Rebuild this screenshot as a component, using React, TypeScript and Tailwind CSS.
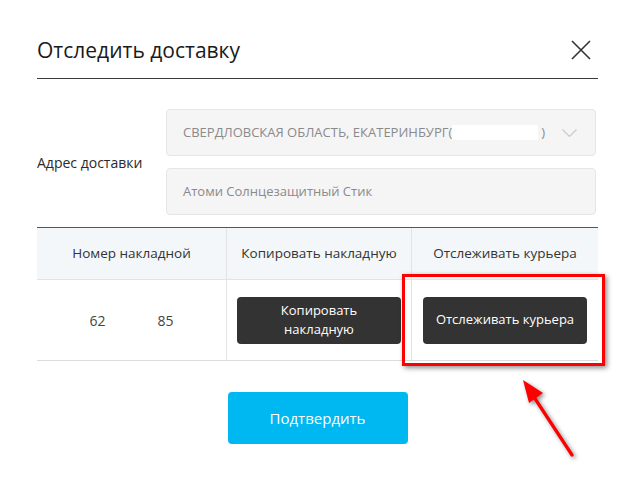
import { useState } from 'react';

const font = { fontFamily: '"Open Sans", "Noto Sans", sans-serif' };

function CloseIcon() {
    return (
        <svg width="20" height="20" viewBox="0 0 20 20" fill="none" stroke="#333" strokeWidth="1.6">
            <path d="M1 1 L19 19 M19 1 L1 19" />
        </svg>
    );
}

function Chevron() {
    return (
        <svg width="15" height="8" viewBox="0 0 15 8" fill="none" stroke="#c9c9c9" strokeWidth="1.1">
            <path d="M0.5 0.5 L7.5 7.5 L14.5 0.5" />
        </svg>
    );
}

export default function App() {
    const [open] = useState(true);
    if (!open) return null;

    return (
        <div className="relative w-[635px] h-[480px] bg-white overflow-hidden" style={font}>
            <div className="px-[37px] pt-[30px] w-[635px]">
                {/* Header */}
                <div className="flex items-center justify-between h-[49px] pb-[9px] border-b border-[#3a3a3a]">
                    <h2 className="text-[21px] leading-[28px] text-[#1a1a1a]">Отследить доставку</h2>
                    <button className="mr-[7px]">
                        <CloseIcon />
                    </button>
                </div>

                {/* Address */}
                <div className="flex items-center mt-[30px]">
                    <div className="w-[129px] text-[14px] text-[#2a2a2a]">Адрес доставки</div>
                    <div className="flex flex-col gap-[12px] w-[430px]">
                        <div className="flex items-center justify-between h-[47px] px-[16px] pr-[18px] bg-[#f5f5f5] border border-[#e6e6e6] rounded-[4px] text-[13px] text-[#8a8a8a]">
                            <span className="flex items-center">
                                СВЕРДЛОВСКАЯ ОБЛАСТЬ, ЕКАТЕРИНБУРГ(
                                <span className="inline-block w-[86px] h-[15px] bg-white" />
                                <span className="ml-[3px]">)</span>
                            </span>
                            <Chevron />
                        </div>
                        <div className="flex items-center h-[47px] px-[16px] bg-[#f5f5f5] border border-[#e6e6e6] rounded-[4px] text-[13px] text-[#8a8a8a]">
                            Атоми Солнцезащитный Стик
                        </div>
                    </div>
                </div>

                {/* Table */}
                <div className="mt-[12px] border-t border-[#555]">
                    <div className="grid grid-cols-[189px_185px_1fr] h-[52px] bg-[#f4f7fa] border-b border-[#e3e3e3] text-[13.5px] text-[#333]">
                        <div className="flex items-center justify-center">Номер накладной</div>
                        <div className="flex items-center justify-center border-l border-[#e3e3e3]">Копировать накладную</div>
                        <div className="flex items-center justify-center border-l border-[#e3e3e3]">Отслеживать курьера</div>
                    </div>
                    <div className="grid grid-cols-[189px_185px_1fr] h-[81px] border-b border-[#dcdcdc] text-[13px]">
                        <div className="flex items-center justify-center text-[#444] text-[14px]">
                            <span>62</span>
                            <span className="inline-block w-[52px]" />
                            <span>85</span>
                        </div>
                        <div className="flex items-center justify-center border-l border-[#e3e3e3] px-[10px]">
                            <button className="w-full h-[47px] rounded-[4px] bg-[#333] text-white text-[13px] leading-[19px]">
                                Копировать
                                <br />
                                накладную
                            </button>
                        </div>
                        <div className="flex items-center justify-center border-l border-[#e3e3e3] px-[11px]">
                            <button className="w-full h-[47px] rounded-[4px] bg-[#333] text-white text-[13px]">
                                Отслеживать курьера
                            </button>
                        </div>
                    </div>
                </div>

                {/* Confirm */}
                <div className="flex justify-center mt-[31px]">
                    <button className="w-[180px] h-[52px] rounded-[4px] bg-[#00b8f1] text-white text-[15px] font-medium">
                        Подтвердить
                    </button>
                </div>
            </div>

            {/* Annotation: highlight box */}
            <div className="absolute left-[402px] top-[274px] w-[203px] h-[92px] border-[3px] border-[#ff0000] shadow-[2px_2px_5px_rgba(0,0,0,0.45)]" />

            {/* Annotation: arrow */}
            <svg
                className="absolute left-0 top-0 drop-shadow-[2px_2px_2px_rgba(0,0,0,0.45)]"
                width="635"
                height="480"
                viewBox="0 0 635 480"
                fill="none"
            >
                <path d="M572 455 L532 394" stroke="#ff0000" strokeWidth="3.2" strokeLinecap="round" />
                <polygon points="523,380 543,393 529,403" fill="#ff0000" />
            </svg>
        </div>
    );
}
